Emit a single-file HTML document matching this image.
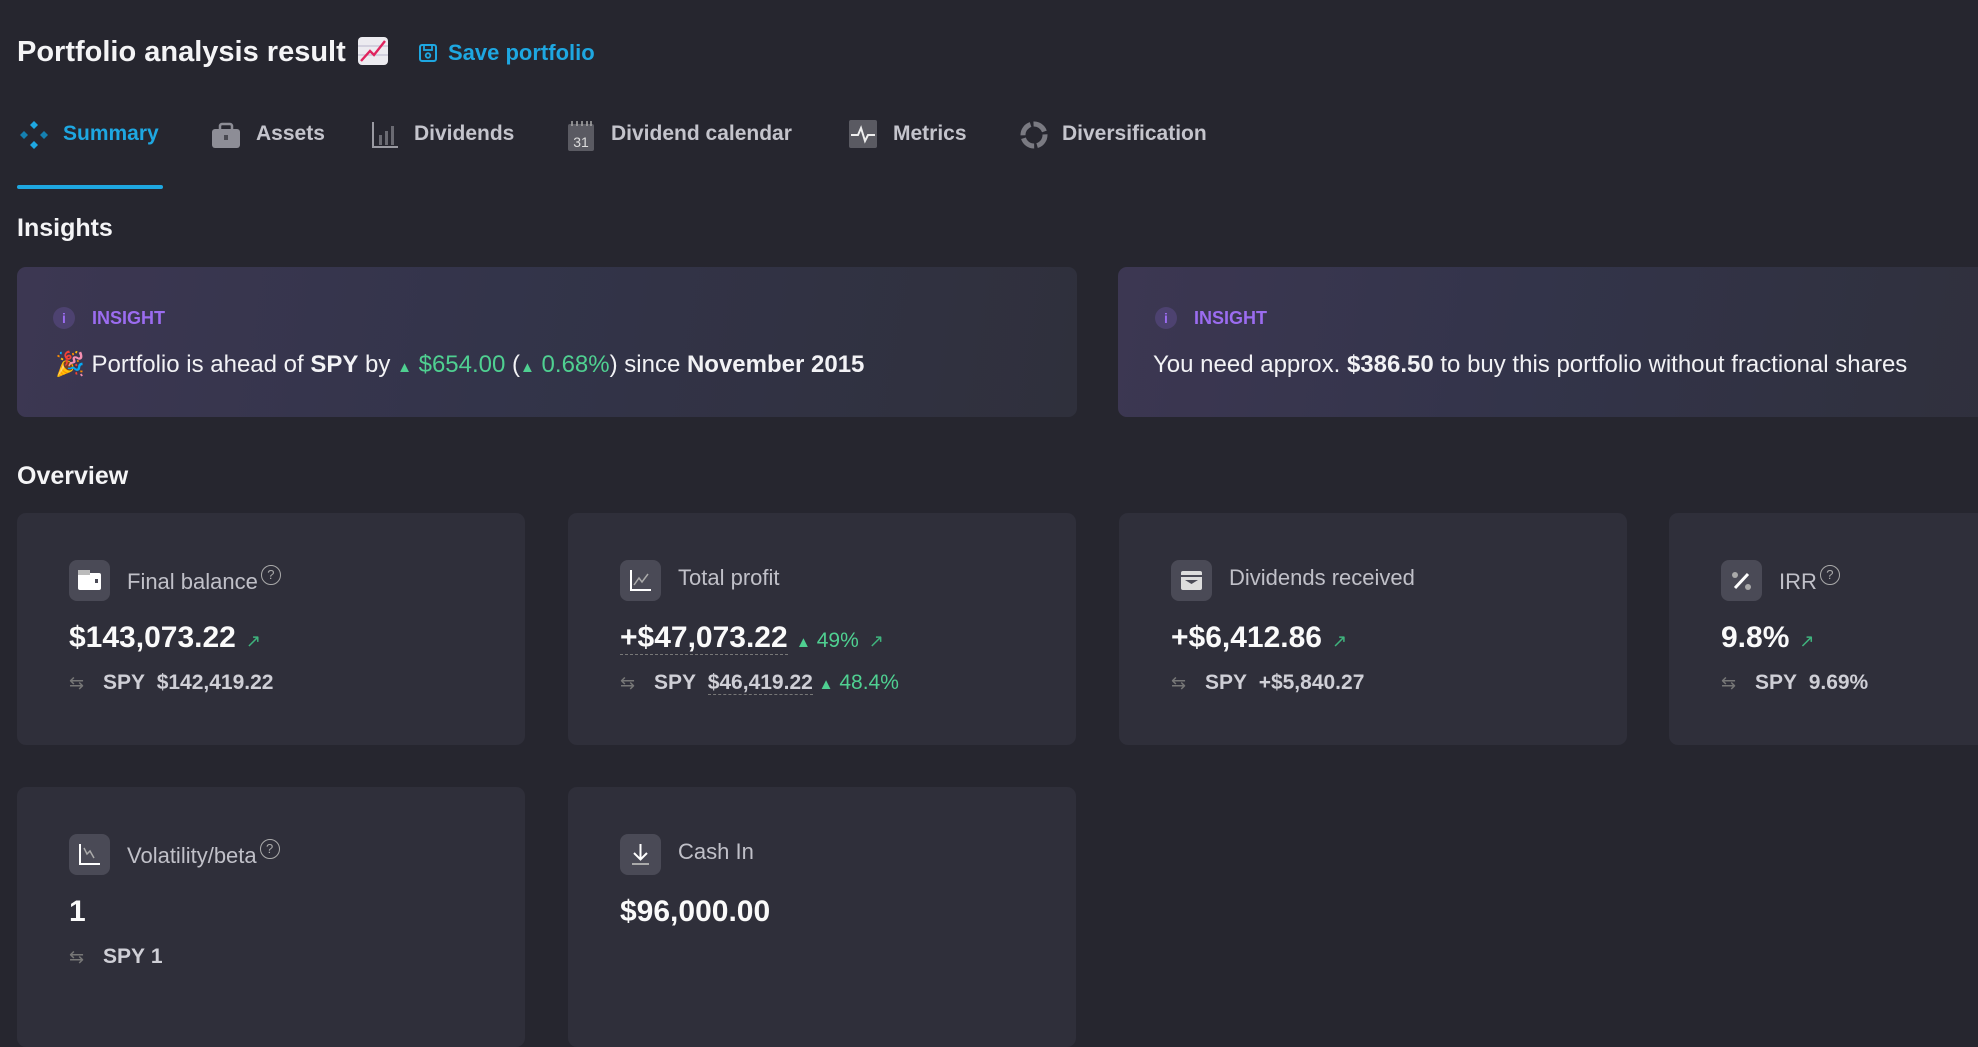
<!DOCTYPE html>
<html><head><meta charset="utf-8"><style>
*{box-sizing:border-box;margin:0;padding:0}
body{width:1978px;height:1000px;overflow:hidden;background:#26262f;font-family:"Liberation Sans",sans-serif;color:#f2f2f5;position:relative}
.abs{position:absolute;white-space:nowrap}
.title{left:17px;top:34px;font-size:29px;line-height:36px;color:#f4f4f6;font-weight:bold}
.save{left:418px;top:40px;font-size:22px;color:#1ea7e1;line-height:26px;font-weight:bold}
.tab{top:121px;font-size:21px;line-height:26px;color:#c4c4cc;font-weight:bold}
.tabi{top:120px}
.ul{left:17px;top:185px;width:146px;height:4px;background:#1ea7e1;border-radius:2px}
.h2{font-size:25px;line-height:30px;color:#f4f4f6;font-weight:bold}
.card{position:absolute;background:#2f2f3a;border-radius:9px}
.ins{background:linear-gradient(100deg,#3c3752 0%,#33344a 45%,#2f303c 100%)}
.inslabel{font-size:18px;color:#9b6cf0;line-height:22px;font-weight:bold}
.icirc{width:22px;height:22px;border-radius:50%;background:#4d4270;color:#9b6cf0;font-size:14px;text-align:center;line-height:22px;font-weight:bold}
.instext{font-size:24px;line-height:28px;color:#f2f2f5}
.g{color:#4fd091}
.ib{position:absolute;left:52px;top:47px;width:41px;height:41px;border-radius:8px;background:#4a4a56}
.lbl{position:absolute;left:110px;top:52px;font-size:22px;line-height:26px;color:#c0c0c8;white-space:nowrap}
.q{display:inline-block;width:20px;height:20px;border:1.5px solid #aaa;border-radius:50%;font-size:13px;line-height:17px;text-align:center;color:#aaa;vertical-align:10px;margin-left:3px}
.val{position:absolute;left:52px;top:108px;font-size:30px;line-height:34px;font-weight:bold;color:#fafafa;white-space:nowrap}
.spy{position:absolute;left:52px;top:157px;font-size:21px;line-height:26px;font-weight:bold;color:#cfcfd6;white-space:nowrap}
.spy .sw{display:inline-block;width:22px;color:#777;font-weight:normal;margin-right:12px;font-size:18px}
.arr{color:#3fb37d;font-size:18px;margin-left:10px;font-weight:normal}
.up{font-size:15px;color:#4fd091}
.dot{border-bottom:1.5px dashed #777}
</style></head><body>
<div class="abs title">Portfolio analysis result <span style="display:inline-block;width:30px;height:28px;background:#ecebf0;border-radius:4px;vertical-align:-4px;position:relative;overflow:hidden;margin-left:4px"><svg width="30" height="28"><path d="M0 9h30M0 18h30" stroke="#c9c7d8" stroke-width="1.5"/><path d="M3 24L12 14L16 18L27 4" stroke="#e0245e" stroke-width="2.4" fill="none"/></svg></span></div>
<div class="abs save"><svg width="20" height="20" style="vertical-align:-3px;margin-right:10px" viewBox="0 0 20 20"><rect x="2" y="2" width="16" height="16" rx="2" fill="none" stroke="#1ea7e1" stroke-width="2"/><rect x="6" y="2" width="8" height="5" fill="none" stroke="#1ea7e1" stroke-width="1.8"/><circle cx="10" cy="12.5" r="2.3" fill="none" stroke="#1ea7e1" stroke-width="1.8"/></svg>Save portfolio</div>

<svg class="abs tabi" style="left:19px" width="30" height="30" viewBox="0 0 30 30"><path d="M15 1l4 4-4 4-4-4z M15 21l4 4-4 4-4-4z" fill="#1ea7e1"/><path d="M5 11l4 4-4 4-4-4z M25 11l4 4-4 4-4-4z" fill="#1580b0"/></svg>
<div class="abs tab" style="left:63px;color:#1ea7e1">Summary</div>
<svg class="abs tabi" style="left:211px" width="30" height="30" viewBox="0 0 30 30"><rect x="1" y="9" width="28" height="19" rx="3" fill="#8d8d96"/><rect x="9" y="4" width="12" height="7" rx="2" fill="none" stroke="#8d8d96" stroke-width="2.5"/><rect x="13" y="15" width="4" height="5" fill="#4a4a52"/></svg>
<div class="abs tab" style="left:256px">Assets</div>
<svg class="abs tabi" style="left:371px" width="28" height="30" viewBox="0 0 28 30"><path d="M2 2v25h25" stroke="#9a9aa2" stroke-width="2" fill="none"/><rect x="8" y="15" width="3" height="10" fill="#6a6a72"/><rect x="14" y="11" width="3" height="14" fill="#6a6a72"/><rect x="20" y="6" width="3" height="19" fill="#6a6a72"/></svg>
<div class="abs tab" style="left:414px">Dividends</div>
<svg class="abs tabi" style="left:567px" width="28" height="32" viewBox="0 0 28 32"><rect x="1" y="4" width="26" height="27" rx="2" fill="#5a5a62"/><path d="M5 1v5M10 1v5M15 1v5M20 1v5M24 1v5" stroke="#aaa" stroke-width="1.5"/><text x="14" y="27" font-size="14" fill="#ddd" text-anchor="middle" font-family="Liberation Sans">31</text></svg>
<div class="abs tab" style="left:611px">Dividend calendar</div>
<svg class="abs tabi" style="left:849px" width="28" height="28" viewBox="0 0 28 28"><rect width="28" height="28" rx="2" fill="#5a5a62"/><path d="M2 15h7l3-7 4 13 3-6h7" stroke="#eee" stroke-width="2" fill="none"/></svg>
<div class="abs tab" style="left:893px">Metrics</div>
<svg class="abs tabi" style="left:1019px" width="30" height="30" viewBox="0 0 30 30"><circle cx="15" cy="15" r="11" fill="none" stroke="#7a7a82" stroke-width="5" stroke-dasharray="14 3"/></svg>
<div class="abs tab" style="left:1062px">Diversification</div>
<div class="abs ul"></div>

<div class="abs h2" style="left:17px;top:213px">Insights</div>
<div class="card ins" style="left:17px;top:267px;width:1060px;height:150px">
 <div class="abs icirc" style="left:36px;top:40px">i</div>
 <div class="abs inslabel" style="left:75px;top:40px">INSIGHT</div>
 <div class="abs instext" style="left:38px;top:84px">🎉 Portfolio is ahead of <b>SPY</b> by <span class="g"><span class="up">▲</span> $654.00</span> (<span class="g"><span class="up">▲</span> 0.68%</span>) since <b>November 2015</b></div>
</div>
<div class="card ins" style="left:1118px;top:267px;width:900px;height:150px">
 <div class="abs icirc" style="left:37px;top:40px">i</div>
 <div class="abs inslabel" style="left:76px;top:40px">INSIGHT</div>
 <div class="abs instext" style="left:35px;top:84px">You need approx. <b>$386.50</b> to buy this portfolio without fractional shares</div>
</div>

<div class="abs h2" style="left:17px;top:461px">Overview</div>

<div class="card" style="left:17px;top:513px;width:508px;height:232px">
 <div class="ib"><svg width="41" height="41"><rect x="9" y="13" width="23" height="17" rx="2" fill="#fff"/><rect x="9" y="10" width="12" height="5" fill="#bbb"/><rect x="26" y="19" width="3" height="4" fill="#4a4a56"/></svg></div>
 <div class="lbl">Final balance<span class="q">?</span></div>
 <div class="val">$143,073.22<span class="arr">↗</span></div>
 <div class="spy"><span class="sw">⇆</span>SPY&nbsp; $142,419.22</div>
</div>
<div class="card" style="left:568px;top:513px;width:508px;height:232px">
 <div class="ib"><svg width="41" height="41"><path d="M11 10v20h20" stroke="#fff" stroke-width="2" fill="none"/><path d="M14 25l5-7 3 4 6-8" stroke="#aaa" stroke-width="1.5" fill="none"/></svg></div>
 <div class="lbl">Total profit</div>
 <div class="val"><span class="dot">+$47,073.22</span> <span class="g" style="font-size:21px;font-weight:normal"><span class="up">▲</span> 49%</span><span class="arr">↗</span></div>
 <div class="spy"><span class="sw">⇆</span>SPY&nbsp; <span class="dot">$46,419.22</span> <span class="g" style="font-weight:normal"><span class="up">▲</span> 48.4%</span></div>
</div>
<div class="card" style="left:1119px;top:513px;width:508px;height:232px">
 <div class="ib"><svg width="41" height="41"><rect x="10" y="11" width="21" height="19" rx="2" fill="#ddd"/><path d="M10 16h21" stroke="#4a4a56" stroke-width="2"/><path d="M14 20h13l-6.5 4z" fill="#4a4a56"/></svg></div>
 <div class="lbl">Dividends received</div>
 <div class="val">+$6,412.86<span class="arr">↗</span></div>
 <div class="spy"><span class="sw">⇆</span>SPY&nbsp; +$5,840.27</div>
</div>
<div class="card" style="left:1669px;top:513px;width:508px;height:232px">
 <div class="ib"><svg width="41" height="41"><path d="M14 28l13-14" stroke="#fff" stroke-width="3"/><circle cx="14" cy="15" r="3" fill="#aaa"/><circle cx="27" cy="27" r="3" fill="#aaa"/></svg></div>
 <div class="lbl">IRR<span class="q">?</span></div>
 <div class="val">9.8%<span class="arr">↗</span></div>
 <div class="spy"><span class="sw">⇆</span>SPY&nbsp; 9.69%</div>
</div>

<div class="card" style="left:17px;top:787px;width:508px;height:260px">
 <div class="ib"><svg width="41" height="41"><path d="M11 10v20h20" stroke="#fff" stroke-width="2" fill="none"/><path d="M15 14l3 6 3-3 4 7" stroke="#aaa" stroke-width="1.5" fill="none"/></svg></div>
 <div class="lbl">Volatility/beta<span class="q">?</span></div>
 <div class="val">1</div>
 <div class="spy"><span class="sw">⇆</span>SPY&nbsp;1</div>
</div>
<div class="card" style="left:568px;top:787px;width:508px;height:260px">
 <div class="ib"><svg width="41" height="41"><path d="M20.5 10v15M14 19l6.5 6.5L27 19" stroke="#fff" stroke-width="2" fill="none"/><path d="M12 30h17" stroke="#aaa" stroke-width="2"/></svg></div>
 <div class="lbl">Cash In</div>
 <div class="val">$96,000.00</div>
</div>
</body></html>
